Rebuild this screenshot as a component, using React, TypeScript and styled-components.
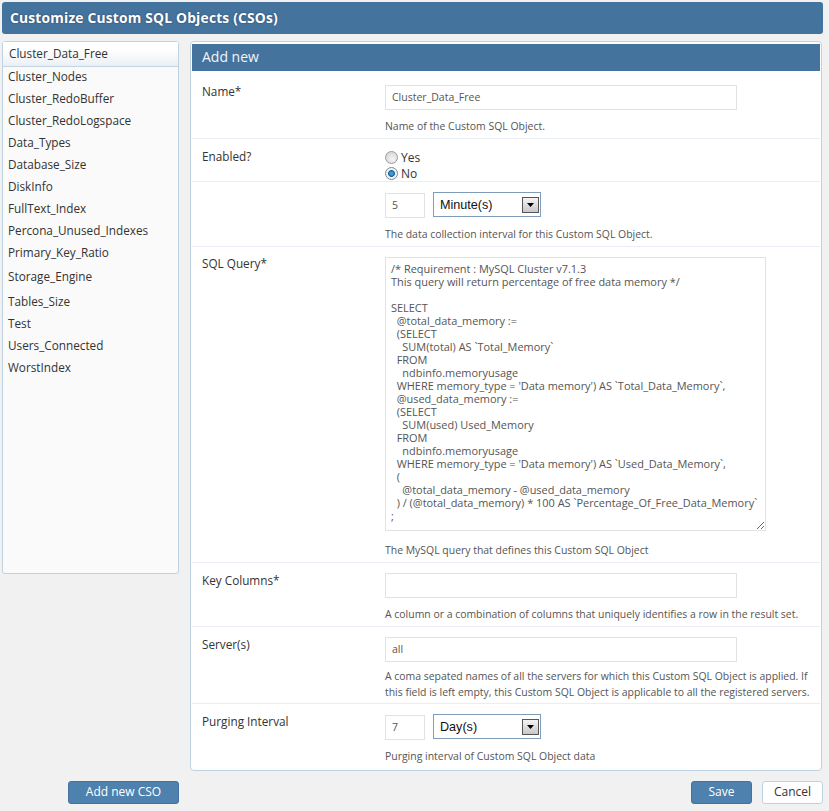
import styled, { createGlobalStyle } from "styled-components";

const csoNames = [
  "Cluster_Data_Free",
  "Cluster_Nodes",
  "Cluster_RedoBuffer",
  "Cluster_RedoLogspace",
  "Data_Types",
  "Database_Size",
  "DiskInfo",
  "FullText_Index",
  "Percona_Unused_Indexes",
  "Primary_Key_Ratio",
  "Storage_Engine",
  "Tables_Size",
  "Test",
  "Users_Connected",
  "WorstIndex",
];

const query = `/* Requirement : MySQL Cluster v7.1.3
This query will return percentage of free data memory */

SELECT
  @total_data_memory :=
  (SELECT
    SUM(total) AS \`Total_Memory\`
  FROM
    ndbinfo.memoryusage
  WHERE memory_type = 'Data memory') AS \`Total_Data_Memory\`,
  @used_data_memory :=
  (SELECT
    SUM(used) Used_Memory
  FROM
    ndbinfo.memoryusage
  WHERE memory_type = 'Data memory') AS \`Used_Data_Memory\`,
  (
    @total_data_memory - @used_data_memory
  ) / (@total_data_memory) * 100 AS \`Percentage_Of_Free_Data_Memory\`
;`;

function UnitSelect({ value, options }: { value: string; options: string[] }) {
  return (
    <SelectWrap>
      <Select defaultValue={value}>
        {options.map((o) => (
          <option key={o}>{o}</option>
        ))}
      </Select>
      <SelectArrow>
        <svg width="7" height="4" viewBox="0 0 7 4">
          <path d="M0 0h7L3.5 4z" fill="#000" />
        </svg>
      </SelectArrow>
    </SelectWrap>
  );
}

export default function App() {
  return (
    <Page>
      <GlobalStyle />
      <TitleBar>Customize Custom SQL Objects (CSOs)</TitleBar>
      <Columns>
        <Sidebar>
          {csoNames.map((name, i) => (
            <SideItem key={name} $active={i === 0}>
              {name}
            </SideItem>
          ))}
        </Sidebar>
        <Main>
          <PanelHead>Add new</PanelHead>
          <Row $height={68}>
            <Label $top={12}>Name*</Label>
            <Field $top={14}>
              <TextInput $width={352} defaultValue="Cluster_Data_Free" />
              <Hint>Name of the Custom SQL Object.</Hint>
            </Field>
          </Row>
          <Row $height={43}>
            <Label $top={9}>Enabled?</Label>
            <RadioGroup>
              <RadioLine>
                <Radio type="radio" name="enabled" />
                Yes
              </RadioLine>
              <RadioLine>
                <Radio type="radio" name="enabled" defaultChecked />
                No
              </RadioLine>
            </RadioGroup>
          </Row>
          <Row $height={65}>
            <Label $top={9} />
            <Field $top={11}>
              <InlineControls>
                <TextInput $width={40} defaultValue="5" />
                <UnitSelect value="Minute(s)" options={["Minute(s)", "Hour(s)", "Day(s)"]} />
              </InlineControls>
              <Hint>The data collection interval for this Custom SQL Object.</Hint>
            </Field>
          </Row>
          <Row $height={316}>
            <Label $top={8}>SQL Query*</Label>
            <Field $top={10}>
              <QueryBox readOnly defaultValue={query} spellCheck={false} />
              <Hint>The MySQL query that defines this Custom SQL Object</Hint>
            </Field>
          </Row>
          <Row $height={64}>
            <Label $top={9}>Key Columns*</Label>
            <Field $top={10}>
              <TextInput $width={352} />
              <Hint>A column or a combination of columns that uniquely identifies a row in the result set.</Hint>
            </Field>
          </Row>
          <Row $height={77}>
            <Label $top={9}>Server(s)</Label>
            <Field $top={10}>
              <TextInput $width={352} defaultValue="all" />
              <Hint $gap={7}>
                A coma sepated names of all the servers for which this Custom SQL Object is applied. If
                <br />
                this field is left empty, this Custom SQL Object is applicable to all the registered servers.
              </Hint>
            </Field>
          </Row>
          <LastRow>
            <Label $top={9}>Purging Interval</Label>
            <Field $top={11}>
              <InlineControls>
                <TextInput $width={40} defaultValue="7" />
                <UnitSelect value="Day(s)" options={["Minute(s)", "Hour(s)", "Day(s)"]} />
              </InlineControls>
              <Hint>Purging interval of Custom SQL Object data</Hint>
            </Field>
          </LastRow>
        </Main>
      </Columns>
      <Footer>
        <FooterLeft>
          <PrimaryButton $width={111}>Add new CSO</PrimaryButton>
        </FooterLeft>
        <FooterRight>
          <PrimaryButton $width={61}>Save</PrimaryButton>
          <SecondaryButton>Cancel</SecondaryButton>
        </FooterRight>
      </Footer>
    </Page>
  );
}

const GlobalStyle = createGlobalStyle`
  html, body {
    margin: 0;
    background: #f1f1f1;
  }
  body {
    font-family: "Open Sans", sans-serif;
    font-size: 12px;
    color: #333;
  }
`;

const Page = styled.div`
  width: 829px;
  height: 811px;
  padding: 2px 6px 0 2px;
  box-sizing: border-box;
  overflow: hidden;
`;

const TitleBar = styled.div`
  height: 32px;
  background: #44739e;
  border-radius: 3px;
  color: #fff;
  font-size: 13.8px;
  font-weight: 700;
  line-height: 31px;
  padding-left: 8px;
  letter-spacing: 0.2px;
  text-shadow: 0 0 2px rgba(0, 0, 0, 0.4);
`;

const Columns = styled.div`
  display: flex;
  align-items: flex-start;
  gap: 11px;
  margin-top: 7px;
`;

const Sidebar = styled.div`
  width: 177px;
  height: 533px;
  box-sizing: border-box;
  background: #fafafa;
  border: 1px solid #bfd2e2;
  border-radius: 3px;
`;

const SideItem = styled.div<{ $active?: boolean }>`
  height: ${(p) => (p.$active ? 25 : 22)}px;
  line-height: ${(p) => (p.$active ? 23 : 20)}px;
  padding-left: ${(p) => (p.$active ? 6 : 5)}px;
  font-size: 11.75px;
  color: #333;
  &:nth-child(11) {
    margin-top: 2px;
  }
  &:nth-child(12) {
    margin-top: 3px;
  }
  ${(p) =>
    p.$active &&
    `
    background: linear-gradient(#ffffff 30%, #ebeff4);
    border-bottom: 1px solid #c3d4e3;
    box-sizing: border-box;
    margin-bottom: -1px;
  `}
`;

const Main = styled.div`
  width: 632px;
  height: 730px;
  box-sizing: border-box;
  padding: 2px 1px 0;
  background: #fff;
  border: 1px solid #bfd2e2;
  border-radius: 4px;
`;

const PanelHead = styled.div`
  height: 27px;
  background: #44739e;
  color: #f2f5f8;
  font-size: 14px;
  line-height: 25px;
  padding-left: 10px;
`;

const Row = styled.div<{ $height: number }>`
  display: grid;
  grid-template-columns: 193px 1fr;
  height: ${(p) => p.$height}px;
  box-sizing: border-box;
  border-bottom: 1px solid #e8eef3;
`;

const LastRow = styled(Row).attrs({ $height: 66 })`
  border-bottom: none;
`;

const Label = styled.div<{ $top: number }>`
  padding: ${(p) => p.$top}px 0 0 10px;
  font-size: 11.75px;
  line-height: 17px;
  color: #333;
`;

const Field = styled.div<{ $top: number }>`
  padding-top: ${(p) => p.$top}px;
`;

const TextInput = styled.input<{ $width: number }>`
  display: block;
  width: ${(p) => p.$width}px;
  height: 25px;
  box-sizing: border-box;
  border: 1px solid #e2e2e2;
  background: #fff;
  padding: 0 6px 2px;
  font-family: "Open Sans", sans-serif;
  font-size: 10.5px;
  color: #555;
  outline: none;
`;

const Hint = styled.div<{ $gap?: number }>`
  margin-top: ${(p) => p.$gap ?? 9}px;
  font-size: 10.45px;
  line-height: 15.5px;
  color: #555;
  white-space: nowrap;
`;

const RadioGroup = styled.div`
  padding-top: 10px;
  display: flex;
  flex-direction: column;
`;

const RadioLine = styled.label`
  display: flex;
  align-items: center;
  gap: 3px;
  height: 16px;
  font-size: 12px;
  color: #333;
`;

const Radio = styled.input`
  appearance: none;
  margin: 0;
  width: 13px;
  height: 13px;
  border-radius: 50%;
  border: 1px solid #9a9a9a;
  background: radial-gradient(circle at 60% 65%, #f4f4f4, #cfcfcf);
  &:checked {
    border-color: #7d8a96;
    background: radial-gradient(circle at 50% 50%, #3f9ad6 0 1.5px, #0f5f96 3px, #f2f2f2 3.8px);
  }
`;

const InlineControls = styled.div`
  display: flex;
  align-items: flex-start;
  gap: 8px;
`;

const SelectWrap = styled.div`
  position: relative;
  width: 108px;
  height: 25px;
  margin-top: -1px;
`;

const Select = styled.select`
  appearance: none;
  width: 100%;
  height: 100%;
  box-sizing: border-box;
  border: 1px solid #7f9db9;
  border-radius: 0;
  background: #fff;
  padding: 0 6px;
  font-family: "Liberation Sans", sans-serif;
  font-size: 12.6px;
  color: #111;
  outline: none;
`;

const SelectArrow = styled.span`
  position: absolute;
  right: 2px;
  top: 5px;
  width: 17px;
  height: 16px;
  box-sizing: border-box;
  border: 1px solid #555;
  background: linear-gradient(#f4f4f4, #c8c8c8);
  display: flex;
  align-items: center;
  justify-content: center;
  pointer-events: none;
`;

const QueryBox = styled.textarea`
  display: block;
  width: 381px;
  height: 274px;
  box-sizing: border-box;
  margin-bottom: 12px;
  padding: 4px 5px;
  border: 1px solid #e2e2e2;
  font-family: "Open Sans", sans-serif;
  font-size: 10.95px;
  line-height: 13px;
  color: #555;
  outline: none;
  white-space: pre;
  overflow: hidden;
`;

const Footer = styled.div`
  display: flex;
  justify-content: space-between;
  margin-top: 10px;
`;

const FooterLeft = styled.div`
  padding-left: 66px;
`;

const FooterRight = styled.div`
  display: flex;
  gap: 10px;
`;

const PrimaryButton = styled.button<{ $width: number }>`
  width: ${(p) => p.$width}px;
  height: 23px;
  border: 1px solid #44739e;
  border-radius: 3px;
  background: #4f81ae;
  color: #fff;
  font-family: "Open Sans", sans-serif;
  font-size: 12px;
  line-height: 19px;
  padding: 0 0 2px;
`;

const SecondaryButton = styled.button`
  width: 61px;
  height: 23px;
  border: 1px solid #bfd2e2;
  border-radius: 3px;
  background: #fff;
  color: #333;
  font-family: "Open Sans", sans-serif;
  font-size: 12px;
  line-height: 19px;
  padding: 0 0 2px;
`;
